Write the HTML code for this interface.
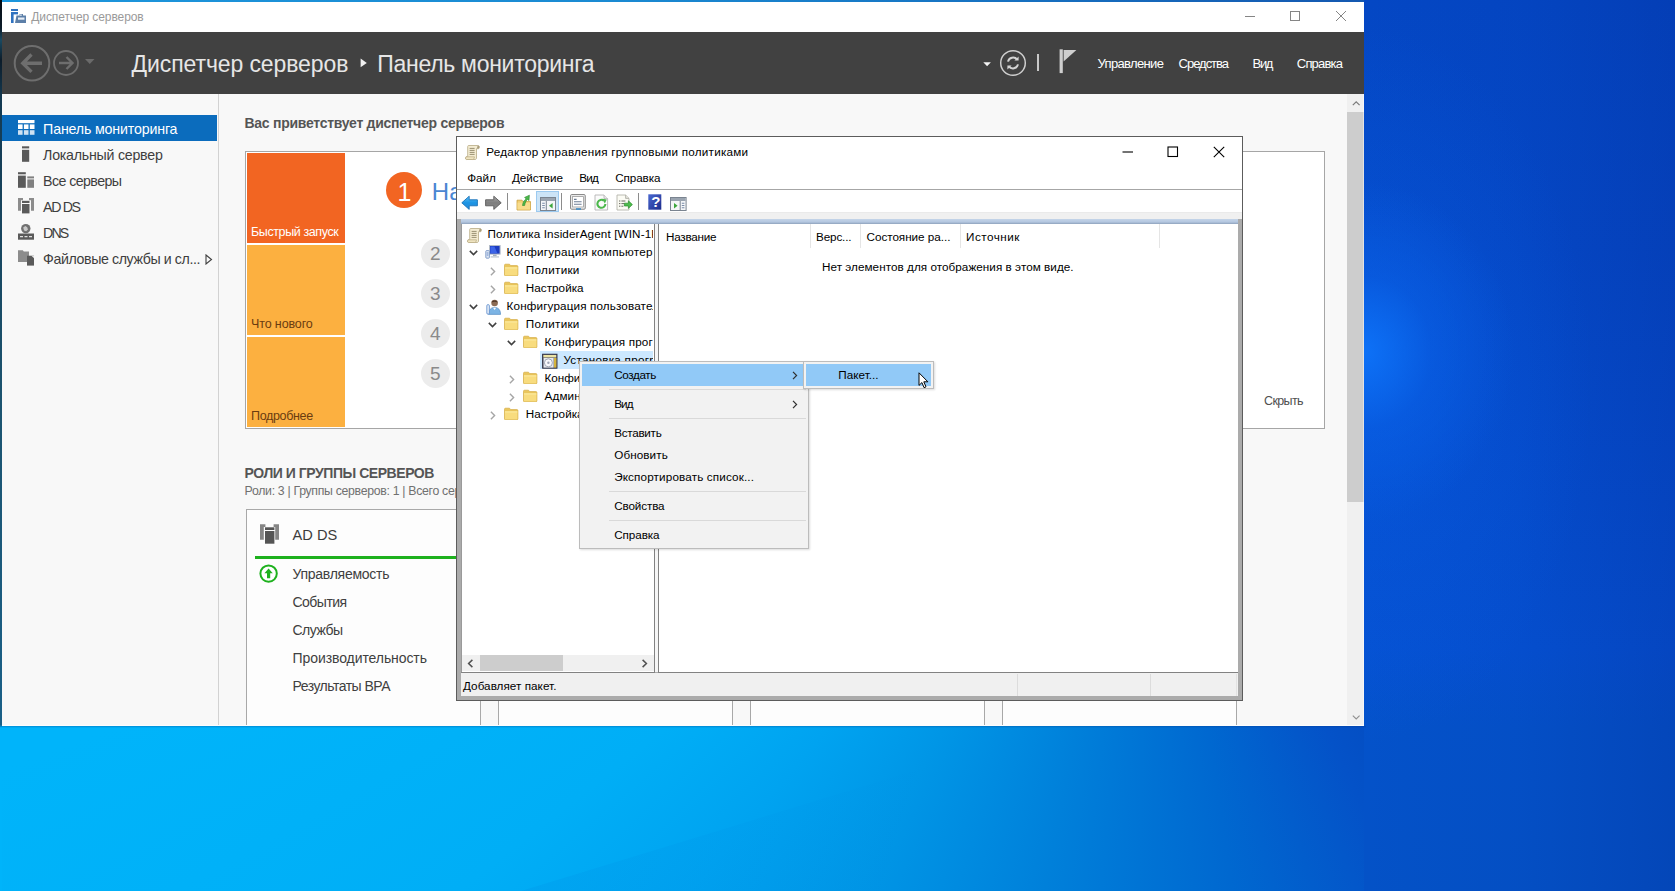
<!DOCTYPE html>
<html lang="ru"><head><meta charset="utf-8"><title>Диспетчер серверов</title>
<style>
html,body{margin:0;padding:0}
body{width:1675px;height:891px;overflow:hidden;position:relative;font-family:"Liberation Sans", sans-serif;background:conic-gradient(from 0deg at 1150px 350px,#0442ba 0deg,#0442b6 125deg,#0440b4 131deg,#0448bc 141deg,#0452c8 155deg,#0068d0 171.3deg,#0080da 191deg,#0096e6 208.6deg,#00a3f0 220.4deg,#00aef6 232deg,#00b4fa 250deg,#00b4fa 360deg);}
div,span.t,svg{position:absolute;box-sizing:border-box}
span.t{white-space:pre;display:block}

</style></head><body>
<div style="left:0px;top:0px;width:2px;height:891px;background:linear-gradient(#060c14 0px,#0c1c2a 28px,#1a4a62 40px,#0c1c2a 60px,#143a52 100px,#1c5470 400px,#1a6088 725px,#00b4fa 727px,#00b4fa 891px)"></div>
<div style="left:1364px;top:0px;width:311px;height:891px;background:radial-gradient(ellipse 150px 170px at 0px 352px, rgba(14,116,250,.92) 0%, rgba(10,100,236,.45) 45%, rgba(6,84,216,0) 100%),radial-gradient(ellipse 230px 360px at 0px 385px, rgba(8,96,230,.42) 0%, rgba(6,84,216,0) 100%),linear-gradient(to right,rgba(4,40,150,0) 0%,rgba(4,40,150,.08) 50%,rgba(4,34,136,.24) 100%),linear-gradient(to bottom,#0447c4 0px,#0549c8 250px,#054dce 450px,#0551d2 650px,#0452ca 727px,#0452c7 891px)"></div>
<div style="left:0px;top:727px;width:1675px;height:164px;clip-path:polygon(521px 164px,1057px 0px,1675px 0px,1675px 164px);background:linear-gradient(107deg,rgba(0,70,190,.0) 30%,rgba(0,70,190,.07) 31%,rgba(0,70,190,0) 55%)"></div>
<div style="left:0px;top:726px;width:1366px;height:2px;background:linear-gradient(rgba(0,50,130,.30),rgba(0,50,130,0))"></div>
<div style="left:2px;top:0px;width:1362px;height:726px;overflow:hidden;background:#f8f8f8">
<div style="left:0px;top:0px;width:1362px;height:2px;background:linear-gradient(to right,#1c96dc 0,#1a8ad2 45%,#1670c0 75%,#1458b0 100%)"></div>
<div style="left:0px;top:2px;width:1362px;height:30px;background:#fff"></div>
<svg style="left:9px;top:9px;" width="15" height="15" viewBox="0 0 15 15"><rect x="0" y="0" width="7" height="2" fill="#2f72c0"/><rect x="0" y="3" width="7" height="2.4" fill="#2f72c0"/><rect x="0" y="5" width="2.6" height="9" fill="#2f72c0"/><path d="M5.5 6.5h3v-1.5h3.5v1.5h3v7.5h-11z" fill="#5c7fa8"/><rect x="7" y="8.5" width="6.5" height="2.2" fill="#e8eef6"/><rect x="8.6" y="5.6" width="2.2" height="1" fill="#fff"/></svg>
<span class="t" style="left:29.3px;top:8.84px;font-size:12px;line-height:16px;color:#9a9a9a;letter-spacing:-0.096px;">Диспетчер серверов</span>
<svg style="left:1242px;top:10px;" width="12" height="12" viewBox="0 0 12 12"><path d="M1 6.5h10" stroke="#858585" stroke-width="1" fill="none"/></svg>
<svg style="left:1287px;top:10px;" width="12" height="12" viewBox="0 0 12 12"><rect x="1.5" y="1.5" width="9" height="9" stroke="#858585" stroke-width="1" fill="none"/></svg>
<svg style="left:1333px;top:10px;" width="12" height="12" viewBox="0 0 12 12"><path d="M1 1l10 10M11 1L1 11" stroke="#858585" stroke-width="1" fill="none"/></svg>
<div style="left:0px;top:32px;width:1362px;height:62px;background:#414141"></div>
<svg style="left:10px;top:44px;" width="40" height="40" viewBox="0 0 40 40"><circle cx="20" cy="19.2" r="17.3" stroke="#6e6e6e" stroke-width="2" fill="none"/><path d="M30 19.2H11M19.5 10.5L10.8 19.2l8.7 8.7" stroke="#6e6e6e" stroke-width="3.4" fill="none"/></svg>
<svg style="left:50px;top:49px;" width="28" height="28" viewBox="0 0 28 28"><circle cx="14" cy="14" r="12" stroke="#6e6e6e" stroke-width="1.8" fill="none"/><path d="M7 14h13M14.5 8l6 6-6 6" stroke="#6e6e6e" stroke-width="2.4" fill="none"/></svg>
<svg style="left:83px;top:59px;" width="10" height="6" viewBox="0 0 10 6"><path d="M0 0h9.5L4.75 5z" fill="#6a6a6a"/></svg>
<span class="t" style="left:129.6px;top:49.23px;font-size:23px;line-height:30px;color:#e6e6e6;letter-spacing:-0.103px;">Диспетчер серверов</span>
<svg style="left:357.8px;top:58px;" width="8" height="10" viewBox="0 0 8 10"><path d="M0.6 0.5l6.2 4.4-6.2 4.4z" fill="#f0f0f0"/></svg>
<span class="t" style="left:375.2px;top:49.23px;font-size:23px;line-height:30px;color:#e6e6e6;letter-spacing:-0.276px;">Панель мониторинга</span>
<svg style="left:980.6px;top:62px;" width="9" height="5" viewBox="0 0 9 5"><path d="M0.3 0.2h7.6L4.1 4.2z" fill="#f4f4f4"/></svg>
<svg style="left:997px;top:49px;" width="28" height="28" viewBox="0 0 28 28"><circle cx="14" cy="14" r="12.3" stroke="#cfcfcf" stroke-width="1.5" fill="none"/><path d="M9 12.6a5.2 5.2 0 0 1 9.2-2M19 15.4a5.2 5.2 0 0 1-9.2 2" stroke="#d4d4d4" stroke-width="2" fill="none"/><path d="M19.6 7.4v4.2h-4.2zM8.4 20.6v-4.2h4.2z" fill="#d4d4d4"/></svg>
<div style="left:1034.5px;top:54px;width:2px;height:17px;background:#c8c8c8"></div>
<svg style="left:1055px;top:48px;" width="22" height="27" viewBox="0 0 22 27"><path d="M2.6 1.3h3.2v23.8h-3.2z" fill="#cfcfcf"/><path d="M6.6 2h12.8L6.6 13.4z" fill="#cfcfcf"/></svg>
<span class="t" style="left:1095.6px;top:55.40px;font-size:13px;line-height:17px;color:#fff;letter-spacing:-0.665px;">Управление</span>
<span class="t" style="left:1176.6px;top:55.40px;font-size:13px;line-height:17px;color:#fff;letter-spacing:-1.028px;">Средства</span>
<span class="t" style="left:1250.6px;top:55.40px;font-size:13px;line-height:17px;color:#fff;letter-spacing:-1.366px;">Вид</span>
<span class="t" style="left:1294.8px;top:55.40px;font-size:13px;line-height:17px;color:#fff;letter-spacing:-0.800px;">Справка</span>
<div style="left:216px;top:94px;width:1px;height:632px;background:#d2d2d2"></div>
<div style="left:0px;top:115px;width:215px;height:26px;background:#0b6cbd"></div>
<svg style="left:16px;top:120.2px;" width="17" height="15" viewBox="0 0 17 15"><g fill="#fff"><rect x="0" y="0" width="16.5" height="3.2"/><rect x="0" y="4.4" width="4.6" height="4.6"/><rect x="5.9" y="4.4" width="4.6" height="4.6"/><rect x="11.8" y="4.4" width="4.7" height="4.6"/><rect x="0" y="10.2" width="4.6" height="4.6" opacity=".8"/><rect x="5.9" y="10.2" width="4.6" height="4.6" opacity=".8"/><rect x="11.8" y="10.2" width="4.7" height="4.6" opacity=".8"/></g></svg>
<svg style="left:15px;top:146px;" width="18" height="17" viewBox="0 0 18 17"><rect x="5" y="0.3" width="7.2" height="2.1" fill="#5a5a5a"/><rect x="5" y="3.8" width="7.2" height="12" fill="#5a5a5a"/></svg>
<svg style="left:15px;top:172px;" width="18" height="17" viewBox="0 0 18 17"><rect x="1" y="0.2" width="7.8" height="2.1" fill="#5a5a5a"/><rect x="1" y="3.6" width="7.8" height="12.2" fill="#5a5a5a"/><rect x="10.3" y="4.4" width="6.7" height="2" fill="#808080"/><rect x="10.3" y="7.4" width="6.7" height="8.4" fill="#808080"/></svg>
<svg style="left:15px;top:197px;" width="18" height="18" viewBox="0 0 18 18"><path d="M1 1h5v2.2h-2v10.5h-3zM17 1h-5v2.2h2v10.5h3z" fill="#8c8c8c"/><rect x="5" y="3.8" width="7.5" height="2.2" fill="#5a5a5a"/><rect x="5" y="7" width="7.5" height="9.4" fill="#5a5a5a"/></svg>
<svg style="left:15px;top:223px;" width="18" height="18" viewBox="0 0 18 18"><circle cx="8.8" cy="5.6" r="4.7" fill="#707070"/><path d="M6.2 4.6l2.2-1.6 1.8 1.2.8 2.2-1.8 1.8-2.2-.8z" fill="#c8c8c8"/><rect x="1" y="10.5" width="16" height="6.2" fill="#5a5a5a"/><path d="M3 13.6h3M7.5 13.6h3M12 13.6h3" stroke="#e0e0e0" stroke-width="1.1"/></svg>
<svg style="left:15px;top:249px;" width="18" height="18" viewBox="0 0 18 18"><path d="M1 1.2h4.8l1 1.4h5.2v10.4h-11z" fill="#8c8c8c"/><path d="M10 6.7h7v9.9h-7z" fill="#5a5a5a"/><path d="M14.4 6.7h2.6v2.6z" fill="#e8e8e8"/></svg>
<span class="t" style="left:41.1px;top:120.08px;font-size:14.2px;line-height:18px;color:#fff;letter-spacing:-0.153px;">Панель мониторинга</span>
<span class="t" style="left:41.1px;top:146.08px;font-size:14.2px;line-height:18px;color:#3e3e3e;letter-spacing:-0.235px;">Локальный сервер</span>
<span class="t" style="left:41.1px;top:172.08px;font-size:14.2px;line-height:18px;color:#3e3e3e;letter-spacing:-0.572px;">Все серверы</span>
<span class="t" style="left:41.1px;top:198.08px;font-size:14.2px;line-height:18px;color:#3e3e3e;letter-spacing:-1.365px;">AD DS</span>
<span class="t" style="left:41.1px;top:224.08px;font-size:14.2px;line-height:18px;color:#3e3e3e;letter-spacing:-1.884px;">DNS</span>
<span class="t" style="left:41.1px;top:250.08px;font-size:14.2px;line-height:18px;color:#3e3e3e;letter-spacing:-0.396px;">Файловые службы и сл...</span>
<svg style="left:203px;top:254px;" width="8" height="11" viewBox="0 0 8 11"><path d="M1 1l5.5 4.5L1 10z" stroke="#404040" stroke-width="1.1" fill="none"/></svg>
<span class="t" style="left:242.5px;top:114.15px;font-size:14px;line-height:18px;color:#555;font-weight:700;letter-spacing:-0.274px;">Вас приветствует диспетчер серверов</span>
<div style="left:243px;top:151px;width:1080px;height:278px;background:#fff;border:1px solid #a6a6a6"></div>
<div style="left:245px;top:153px;width:98px;height:90px;background:#f26522"></div>
<div style="left:245px;top:245px;width:98px;height:90px;background:#fcb040"></div>
<div style="left:245px;top:337px;width:98px;height:90px;background:#fcb040"></div>
<span class="t" style="left:249px;top:223.97px;font-size:12.5px;line-height:16px;color:#fff;letter-spacing:-0.388px;">Быстрый запуск</span>
<span class="t" style="left:249px;top:315.97px;font-size:12.5px;line-height:16px;color:#6a3c10;letter-spacing:-0.121px;">Что нового</span>
<span class="t" style="left:249px;top:407.97px;font-size:12.5px;line-height:16px;color:#6a3c10;letter-spacing:-0.329px;">Подробнее</span>
<div style="left:383.7px;top:172px;width:36px;height:36px;background:#f26522;border-radius:50%"></div>
<span class="t" style="left:395.6px;top:175.74px;font-size:25px;line-height:32px;color:#fff;">1</span>
<span class="t" style="left:429.8px;top:176.18px;font-size:24px;line-height:31px;color:#4a86d2;">На</span>
<div style="left:418.5px;top:239.3px;width:29px;height:29px;background:#ececec;border-radius:50%"></div>
<span class="t" style="left:428px;top:241.42px;font-size:19px;line-height:25px;color:#8a8a8a;">2</span>
<div style="left:418.5px;top:279.3px;width:29px;height:29px;background:#ececec;border-radius:50%"></div>
<span class="t" style="left:428px;top:281.42px;font-size:19px;line-height:25px;color:#8a8a8a;">3</span>
<div style="left:418.5px;top:319.3px;width:29px;height:29px;background:#ececec;border-radius:50%"></div>
<span class="t" style="left:428px;top:321.42px;font-size:19px;line-height:25px;color:#8a8a8a;">4</span>
<div style="left:418.5px;top:359.3px;width:29px;height:29px;background:#ececec;border-radius:50%"></div>
<span class="t" style="left:428px;top:361.42px;font-size:19px;line-height:25px;color:#8a8a8a;">5</span>
<span class="t" style="left:1262px;top:392.67px;font-size:12.5px;line-height:16px;color:#505050;letter-spacing:-0.634px;">Скрыть</span>
<span class="t" style="left:242.6px;top:464.35px;font-size:14px;line-height:18px;color:#555;font-weight:700;letter-spacing:-0.454px;">РОЛИ И ГРУППЫ СЕРВЕРОВ</span>
<span class="t" style="left:242.6px;top:482.74px;font-size:12.3px;line-height:16px;color:#707070;letter-spacing:-0.310px;">Роли: 3 | Группы серверов: 1 | Всего серверов: 1</span>
<div style="left:244px;top:509px;width:235px;height:230px;background:#fdfdfd;border:1px solid #a8a8a8"></div>
<div style="left:496px;top:509px;width:235px;height:230px;background:#fdfdfd;border:1px solid #a8a8a8"></div>
<div style="left:748px;top:509px;width:235px;height:230px;background:#fdfdfd;border:1px solid #a8a8a8"></div>
<div style="left:1000px;top:509px;width:235px;height:230px;background:#fdfdfd;border:1px solid #a8a8a8"></div>
<svg style="left:257px;top:523px;" width="21" height="22" viewBox="0 0 21 22"><path d="M1 1.3h5.4v2.6h-1.6v12.9h-3.8zM20 1.3h-5.4v2.6h1.6v12.9h3.8z" fill="#858585"/><rect x="6" y="4.3" width="9.4" height="2.7" fill="#555"/><rect x="6" y="8" width="9.4" height="12.7" fill="#555"/></svg>
<span class="t" style="left:290.5px;top:526.24px;font-size:14.6px;line-height:19px;color:#3c3c3c;letter-spacing:0.023px;">AD DS</span>
<div style="left:253px;top:556px;width:217px;height:3px;background:#1eb11e"></div>
<svg style="left:257px;top:564px;" width="20" height="20" viewBox="0 0 20 20"><circle cx="9.6" cy="9.6" r="8.2" stroke="#1eb11e" stroke-width="2" fill="#fff"/><path d="M9.6 4.6l4.2 4.6h-2.6v5h-3.2v-5h-2.6z" fill="#1eb11e"/></svg>
<span class="t" style="left:290.5px;top:565.15px;font-size:14px;line-height:18px;color:#404040;letter-spacing:-0.266px;">Управляемость</span>
<span class="t" style="left:290.5px;top:593.15px;font-size:14px;line-height:18px;color:#404040;letter-spacing:-0.516px;">События</span>
<span class="t" style="left:290.5px;top:621.15px;font-size:14px;line-height:18px;color:#404040;letter-spacing:-0.509px;">Службы</span>
<span class="t" style="left:290.5px;top:649.15px;font-size:14px;line-height:18px;color:#404040;letter-spacing:-0.082px;">Производительность</span>
<span class="t" style="left:290.5px;top:677.15px;font-size:14px;line-height:18px;color:#404040;letter-spacing:-0.516px;">Результаты ВРА</span>
<div style="left:1345px;top:94px;width:17px;height:632px;background:#f0f0f0"></div>
<div style="left:1345px;top:112px;width:17px;height:390px;background:#cdcdcd"></div>
<svg style="left:1349px;top:100px;" width="10" height="7" viewBox="0 0 10 7"><path d="M1.8 5.2L5.2 1.8 8.6 5.2" stroke="#7a7a7a" stroke-width="1.2" fill="none"/></svg>
<svg style="left:1349px;top:713.6px;" width="10" height="7" viewBox="0 0 10 7"><path d="M1.8 1.6L5.2 5 8.6 1.6" stroke="#909090" stroke-width="1.1" fill="none"/></svg>
<div style="left:1361px;top:94px;width:1px;height:632px;background:rgba(255,255,255,.45)"></div>
<div style="left:0px;top:725px;width:1362px;height:1px;background:#fdfdfd"></div>
</div>
<div style="left:456px;top:136px;width:787px;height:565px;overflow:hidden;background:#fff;border:1px solid #5c5c5c;overflow:hidden">
<svg style="left:8px;top:7px;" width="16" height="17" viewBox="0 0 16 17"><path d="M3.5 1.5h9.2c1.2 0 2 .8 1.6 2l-.5 1.2h-2.3v9.3c0 .9-.6 1.5-1.5 1.5H1.8c-1 0-1.5-.8-1.2-1.6l.6-1.2h1.5V3c0-.9.3-1.5.8-1.5z" fill="#f4ecd2" stroke="#b8ab84" stroke-width=".8"/><path d="M12.6 1.6c1.3-.1 2 .9 1.7 1.9l-.4 1.1h-2z" fill="#a89c7c"/><path d="M4.6 4.4h5M4.6 6.4h5M4.6 8.4h5M4.6 10.4h5" stroke="#8f8666" stroke-width=".9"/><path d="M1.2 12.8h8.3l-.4 1.5c-.2.7-.6 1.2-1.4 1.2H1.8c-1 0-1.5-.8-1.2-1.6z" fill="#efe4c0" stroke="#b8ab84" stroke-width=".7"/></svg>
<span class="t" style="left:29.3px;top:7.05px;font-size:11.7px;line-height:15px;color:#000;letter-spacing:0.221px;">Редактор управления групповыми политиками</span>
<svg style="left:665px;top:9px;" width="12" height="12" viewBox="0 0 12 12"><path d="M0.5 6h10.5" stroke="#000" stroke-width="1.1" fill="none"/></svg>
<svg style="left:710px;top:8.5px;" width="12" height="12" viewBox="0 0 12 12"><rect x="1" y="1" width="9.5" height="9.5" stroke="#000" stroke-width="1.1" fill="none"/></svg>
<svg style="left:756px;top:8.5px;" width="12" height="12" viewBox="0 0 12 12"><path d="M0.8 0.8l10.4 10.4M11.2 0.8L0.8 11.2" stroke="#000" stroke-width="1.1" fill="none"/></svg>
<span class="t" style="left:10.3px;top:33.05px;font-size:11.7px;line-height:15px;color:#000;letter-spacing:-0.078px;">Файл</span>
<span class="t" style="left:55px;top:33.05px;font-size:11.7px;line-height:15px;color:#000;letter-spacing:-0.056px;">Действие</span>
<span class="t" style="left:122.3px;top:33.05px;font-size:11.7px;line-height:15px;color:#000;letter-spacing:-0.828px;">Вид</span>
<span class="t" style="left:158.2px;top:33.05px;font-size:11.7px;line-height:15px;color:#000;letter-spacing:-0.093px;">Справка</span>
<div style="left:0px;top:52px;width:785px;height:1px;background:#a6a6a6"></div>
<div style="left:0px;top:75px;width:785px;height:7px;background:linear-gradient(#e4e4e4 0,#f0f0f0 1px,#f0f0f0 100%)"></div>
<div style="left:0px;top:82px;width:785px;height:5px;background:#ababab"></div>
<div style="left:4px;top:82px;width:777px;height:5px;background:linear-gradient(#c4d4e8,#b4c7e0 60%,#8ea2bc)"></div>
<svg style="left:4px;top:57.6px;" width="18" height="15.5" viewBox="0 0 18 15.5"><defs><linearGradient id="gb" x1="0" y1="0" x2="0" y2="1"><stop offset="0" stop-color="#5ec0f6"/><stop offset=".5" stop-color="#1c94e4"/><stop offset="1" stop-color="#2a8ad8"/></linearGradient></defs><path d="M8.2 1.2L0.8 7.8l7.4 6.6v-3.6h8.2V4.8H8.2z" fill="url(#gb)" stroke="#1872b8" stroke-width=".9" stroke-linejoin="round"/></svg>
<svg style="left:27px;top:57.6px;" width="18" height="15.5" viewBox="0 0 18 15.5"><defs><linearGradient id="gg" x1="0" y1="0" x2="0" y2="1"><stop offset="0" stop-color="#a8a8a8"/><stop offset=".5" stop-color="#7e7e7e"/><stop offset="1" stop-color="#8c8c8c"/></linearGradient></defs><path d="M9.8 1.2l7.4 6.6-7.4 6.6v-3.6H1.6V4.8h8.2z" fill="url(#gg)" stroke="#5a5a5a" stroke-width=".9" stroke-linejoin="round"/></svg>
<div style="left:50px;top:56px;width:1px;height:17px;background:#8c8c8c"></div>
<svg style="left:59px;top:57px;" width="16" height="17" viewBox="0 0 16 17"><path d="M1 6.2h5l1.2 1.4h7.3v8.4H1z" fill="#f2cf72" stroke="#c9a03c" stroke-width=".8"/><path d="M1.5 8.6h12.6v6.9H1.5z" fill="#f8dc8c"/><path d="M6.5 11.5c.4-3.4 1.8-5.6 3.6-6.6L8.6 3.4 13.4 1.2 13 6.6 11.6 5.4c-1.4 1-2.4 3-3 6.1z" fill="#4cb84c" stroke="#2c8a2c" stroke-width=".6"/></svg>
<div style="left:79px;top:54px;width:23px;height:21px;background:#cce4f7;border:1px solid #9ccaf0"></div>
<svg style="left:83px;top:59.5px;" width="16" height="14" viewBox="0 0 16 14"><rect x=".5" y=".5" width="15" height="13" fill="#f4f6f8" stroke="#7a8490" stroke-width="1"/><rect x="1" y="1" width="14" height="3" fill="#9aa4b0"/><path d="M6.3 4v9.5" stroke="#7a8490" stroke-width="1"/><path d="M2.2 6.3h2.6M2.2 8.5h2.6M2.2 10.7h2.6" stroke="#7a8ca8" stroke-width="1.1"/><path d="M12.6 6l-3.6 2.8 3.6 2.8z" fill="#3ca63c"/></svg>
<div style="left:104px;top:56px;width:1px;height:17px;background:#8c8c8c"></div>
<svg style="left:113px;top:57px;" width="16" height="17" viewBox="0 0 16 17"><rect x=".6" y=".6" width="14.6" height="14.6" rx="1" fill="#f6f6f6" stroke="#7e7e7e" stroke-width="1"/><rect x="2.4" y="2.6" width="11" height="10.4" fill="#fff" stroke="#9a9a9a" stroke-width=".8"/><path d="M4 5.4h2.6M4 7.8h7.6M4 10.2h7.6" stroke="#6c7c94" stroke-width="1.1"/><rect x="6" y="14.2" width="5" height="1.6" fill="#3c8cc8"/></svg>
<svg style="left:137px;top:56.6px;" width="15" height="17" viewBox="0 0 15 17"><path d="M1 1h9l3.6 3.6V16H1z" fill="#fbfbfb" stroke="#b4b4b4" stroke-width=".9"/><path d="M10 1v3.6h3.6" fill="#e8e8e8" stroke="#b4b4b4" stroke-width=".8"/><path d="M11.4 10a4 4 0 1 1-1.6-3.4" stroke="#4cb84c" stroke-width="2.1" fill="none"/><path d="M8.2 4.8l4.6.6-2 4z" fill="#4cb84c"/></svg>
<svg style="left:159px;top:56.6px;" width="17" height="17" viewBox="0 0 17 17"><path d="M1 1h8.6l3.4 3.4V16H1z" fill="#fbfbf4" stroke="#b4b4ac" stroke-width=".9"/><path d="M9.6 1v3.4H13" fill="#e4e4dc" stroke="#a8a8a0" stroke-width=".8"/><path d="M3 7h1.4M5.4 7h4M3 9.6h1.4M5.4 9.6h3M3 12.2h1.4M5.4 12.2h2" stroke="#6a6a60" stroke-width="1"/><path d="M8.4 9.2h4V6.8l4 3.8-4 3.8V12h-4z" fill="#4cbc4c" stroke="#2c8c2c" stroke-width=".7"/></svg>
<div style="left:181px;top:56px;width:1px;height:17px;background:#8c8c8c"></div>
<svg style="left:191px;top:57px;" width="14" height="16" viewBox="0 0 14 16"><defs><linearGradient id="gh" x1="0" y1="0" x2="1" y2="1"><stop offset="0" stop-color="#4a68d0"/><stop offset="1" stop-color="#1c2c8c"/></linearGradient></defs><rect x=".3" y=".3" width="13" height="15.4" fill="url(#gh)"/></svg>
<span class="t" style="left:194.2px;top:55.20px;font-size:15px;line-height:20px;color:#fff;font-weight:700;">?</span>
<svg style="left:213px;top:59.5px;" width="17" height="14" viewBox="0 0 17 14"><rect x=".5" y=".5" width="15.6" height="13" fill="#f4f6f8" stroke="#7a8490" stroke-width="1"/><rect x="1" y="1" width="14.6" height="3" fill="#9aa4b0"/><path d="M10.2 4v9.5" stroke="#7a8490" stroke-width="1"/><path d="M11.8 6.3h2.6M11.8 8.5h2.6M11.8 10.7h2.6" stroke="#7a8ca8" stroke-width="1.1"/><path d="M4 6l3.6 2.8L4 11.6z" fill="#3ca63c"/></svg>
<div style="left:0px;top:87px;width:785px;height:476px;background:#ababab"></div>
<div style="left:4px;top:87px;width:194px;height:449px;overflow:hidden;background:#fff;border-right:1px solid #828282;border-bottom:1px solid #828282">
<div style="left:79px;top:127px;width:114px;height:18px;background:#cce8ff"></div>
<svg style="left:5.5px;top:2.5px;" width="16" height="17" viewBox="0 0 16 17"><path d="M3.5 1.5h9.2c1.2 0 2 .8 1.6 2l-.5 1.2h-2.3v9.3c0 .9-.6 1.5-1.5 1.5H1.8c-1 0-1.5-.8-1.2-1.6l.6-1.2h1.5V3c0-.9.3-1.5.8-1.5z" fill="#f4ecd2" stroke="#b8ab84" stroke-width=".8"/><path d="M12.6 1.6c1.3-.1 2 .9 1.7 1.9l-.4 1.1h-2z" fill="#a89c7c"/><path d="M4.6 4.4h5M4.6 6.4h5M4.6 8.4h5M4.6 10.4h5" stroke="#8f8666" stroke-width=".9"/><path d="M1.2 12.8h8.3l-.4 1.5c-.2.7-.6 1.2-1.4 1.2H1.8c-1 0-1.5-.8-1.2-1.6z" fill="#efe4c0" stroke="#b8ab84" stroke-width=".7"/></svg>
<span class="t" style="left:26.5px;top:2.05px;font-size:11.7px;line-height:15px;color:#000;letter-spacing:0.129px;">Политика InsiderAgent [WIN-1RPQ5V8</span>
<svg style="left:8.2px;top:25.8px;" width="9" height="6" viewBox="0 0 9 6"><path d="M0.8 0.9l3.7 3.7 3.7-3.7" stroke="#404040" stroke-width="1.5" fill="none"/></svg>
<svg style="left:24px;top:21px;" width="16" height="14" viewBox="0 0 16 14"><rect x="4.5" y=".5" width="10.6" height="8.6" fill="#1c3cc0" stroke="#b4bcc8" stroke-width="1"/><path d="M5.4 1.4h4l3 6.8h-7z" fill="#3c64e8"/><rect x="8" y="9.6" width="3.6" height="1.6" fill="#a8b0bc"/><rect x="5.6" y="11.2" width="8.4" height="1.4" fill="#c4ccd6"/><rect x=".8" y="5.6" width="3.6" height="7.6" rx=".8" fill="#dfe8f4" stroke="#6c8cc0" stroke-width=".8"/><path d="M1.8 8h1.6M1.8 10h1.6" stroke="#4c74c0" stroke-width=".8"/></svg>
<span class="t" style="left:45.6px;top:20.05px;font-size:11.7px;line-height:15px;color:#000;letter-spacing:0.257px;">Конфигурация компьютера</span>
<svg style="left:29.3px;top:42.5px;" width="6" height="9" viewBox="0 0 6 9"><path d="M0.9 0.8l3.7 3.7-3.7 3.7" stroke="#a6a6a6" stroke-width="1.4" fill="none"/></svg>
<svg style="left:43px;top:39.3px;" width="15" height="13" viewBox="0 0 15 13"><path d="M.5 2.2c0-.6.4-1 1-1h4l1.2 1.4h6.2c.6 0 1 .4 1 1v8.3c0 .5-.4.9-1 .9H1.5c-.6 0-1-.4-1-.9z" fill="#eac65c" stroke="#d4ac44" stroke-width=".7"/><path d="M1 4.4h12.4v7.3c0 .4-.2.6-.6.6H1.6c-.4 0-.6-.2-.6-.6z" fill="#f8dc7e"/><path d="M1 4.4h12.4v1H1z" fill="#fdeea8"/></svg>
<span class="t" style="left:64.8px;top:38.05px;font-size:11.7px;line-height:15px;color:#000;letter-spacing:0.298px;">Политики</span>
<svg style="left:29.3px;top:60.5px;" width="6" height="9" viewBox="0 0 6 9"><path d="M0.9 0.8l3.7 3.7-3.7 3.7" stroke="#a6a6a6" stroke-width="1.4" fill="none"/></svg>
<svg style="left:43px;top:57.3px;" width="15" height="13" viewBox="0 0 15 13"><path d="M.5 2.2c0-.6.4-1 1-1h4l1.2 1.4h6.2c.6 0 1 .4 1 1v8.3c0 .5-.4.9-1 .9H1.5c-.6 0-1-.4-1-.9z" fill="#eac65c" stroke="#d4ac44" stroke-width=".7"/><path d="M1 4.4h12.4v7.3c0 .4-.2.6-.6.6H1.6c-.4 0-.6-.2-.6-.6z" fill="#f8dc7e"/><path d="M1 4.4h12.4v1H1z" fill="#fdeea8"/></svg>
<span class="t" style="left:64.8px;top:56.05px;font-size:11.7px;line-height:15px;color:#000;letter-spacing:0.032px;">Настройка</span>
<svg style="left:8.2px;top:79.8px;" width="9" height="6" viewBox="0 0 9 6"><path d="M0.8 0.9l3.7 3.7 3.7-3.7" stroke="#404040" stroke-width="1.5" fill="none"/></svg>
<svg style="left:25px;top:74.5px;" width="15" height="16" viewBox="0 0 15 16"><circle cx="8.6" cy="4" r="3.3" fill="#8c6c54"/><path d="M5.6 3.4c.6-2.4 5-2.6 6 0-1.6-1-4.2-1-6 0z" fill="#4c3424"/><path d="M2.6 15.4c0-4.6 2.4-7 6-7s6 2.4 6 7z" fill="#7cb4e4" stroke="#4c84bc" stroke-width=".6"/><path d="M7 8.8l1.6 2.2 1.6-2.2z" fill="#fff"/><rect x=".8" y="5.6" width="2.6" height="9.6" rx="1.2" fill="#e4ecf8" stroke="#5c8ccc" stroke-width=".8"/></svg>
<span class="t" style="left:45.6px;top:74.05px;font-size:11.7px;line-height:15px;color:#000;letter-spacing:0.130px;">Конфигурация пользователя</span>
<svg style="left:27.2px;top:97.8px;" width="9" height="6" viewBox="0 0 9 6"><path d="M0.8 0.9l3.7 3.7 3.7-3.7" stroke="#404040" stroke-width="1.5" fill="none"/></svg>
<svg style="left:43px;top:93.3px;" width="15" height="13" viewBox="0 0 15 13"><path d="M.5 2.2c0-.6.4-1 1-1h4l1.2 1.4h6.2c.6 0 1 .4 1 1v8.3c0 .5-.4.9-1 .9H1.5c-.6 0-1-.4-1-.9z" fill="#eac65c" stroke="#d4ac44" stroke-width=".7"/><path d="M1 4.4h12.4v7.3c0 .4-.2.6-.6.6H1.6c-.4 0-.6-.2-.6-.6z" fill="#f8dc7e"/><path d="M1 4.4h12.4v1H1z" fill="#fdeea8"/></svg>
<span class="t" style="left:64.8px;top:92.05px;font-size:11.7px;line-height:15px;color:#000;letter-spacing:0.298px;">Политики</span>
<svg style="left:46.2px;top:115.8px;" width="9" height="6" viewBox="0 0 9 6"><path d="M0.8 0.9l3.7 3.7 3.7-3.7" stroke="#404040" stroke-width="1.5" fill="none"/></svg>
<svg style="left:62px;top:111.3px;" width="15" height="13" viewBox="0 0 15 13"><path d="M.5 2.2c0-.6.4-1 1-1h4l1.2 1.4h6.2c.6 0 1 .4 1 1v8.3c0 .5-.4.9-1 .9H1.5c-.6 0-1-.4-1-.9z" fill="#eac65c" stroke="#d4ac44" stroke-width=".7"/><path d="M1 4.4h12.4v7.3c0 .4-.2.6-.6.6H1.6c-.4 0-.6-.2-.6-.6z" fill="#f8dc7e"/><path d="M1 4.4h12.4v1H1z" fill="#fdeea8"/></svg>
<span class="t" style="left:83.6px;top:110.05px;font-size:11.7px;line-height:15px;color:#000;letter-spacing:0.182px;">Конфигурация программ</span>
<svg style="left:80.5px;top:128.5px;" width="16" height="16" viewBox="0 0 16 16"><rect x=".6" y="1.2" width="14.4" height="14" fill="#5c5c6c" stroke="#2c2c3c" stroke-width=".9"/><rect x="1.4" y="2" width="12.8" height="2.4" fill="#ece4a4"/><rect x="1.6" y="5" width="10" height="9.6" fill="#e8ecf0"/><circle cx="6.4" cy="9.8" r="4" fill="#f8f8fc" stroke="#8c94a4" stroke-width=".8"/><circle cx="6.4" cy="9.8" r="1.2" fill="#9ca4b4"/><rect x="12" y="5" width="2.4" height="9.6" fill="#d4b43c"/></svg>
<span class="t" style="left:102.4px;top:128.05px;font-size:11.7px;line-height:15px;color:#000;letter-spacing:0.270px;">Установка программ</span>
<svg style="left:48.3px;top:150.5px;" width="6" height="9" viewBox="0 0 6 9"><path d="M0.9 0.8l3.7 3.7-3.7 3.7" stroke="#a6a6a6" stroke-width="1.4" fill="none"/></svg>
<svg style="left:62px;top:147.3px;" width="15" height="13" viewBox="0 0 15 13"><path d="M.5 2.2c0-.6.4-1 1-1h4l1.2 1.4h6.2c.6 0 1 .4 1 1v8.3c0 .5-.4.9-1 .9H1.5c-.6 0-1-.4-1-.9z" fill="#eac65c" stroke="#d4ac44" stroke-width=".7"/><path d="M1 4.4h12.4v7.3c0 .4-.2.6-.6.6H1.6c-.4 0-.6-.2-.6-.6z" fill="#f8dc7e"/><path d="M1 4.4h12.4v1H1z" fill="#fdeea8"/></svg>
<span class="t" style="left:83.6px;top:146.05px;font-size:11.7px;line-height:15px;color:#000;letter-spacing:-0.070px;">Конфигурация Windows</span>
<svg style="left:48.3px;top:168.5px;" width="6" height="9" viewBox="0 0 6 9"><path d="M0.9 0.8l3.7 3.7-3.7 3.7" stroke="#a6a6a6" stroke-width="1.4" fill="none"/></svg>
<svg style="left:62px;top:165.3px;" width="15" height="13" viewBox="0 0 15 13"><path d="M.5 2.2c0-.6.4-1 1-1h4l1.2 1.4h6.2c.6 0 1 .4 1 1v8.3c0 .5-.4.9-1 .9H1.5c-.6 0-1-.4-1-.9z" fill="#eac65c" stroke="#d4ac44" stroke-width=".7"/><path d="M1 4.4h12.4v7.3c0 .4-.2.6-.6.6H1.6c-.4 0-.6-.2-.6-.6z" fill="#f8dc7e"/><path d="M1 4.4h12.4v1H1z" fill="#fdeea8"/></svg>
<span class="t" style="left:83.6px;top:164.05px;font-size:11.7px;line-height:15px;color:#000;letter-spacing:0.124px;">Административные шаблоны</span>
<svg style="left:29.3px;top:186.5px;" width="6" height="9" viewBox="0 0 6 9"><path d="M0.9 0.8l3.7 3.7-3.7 3.7" stroke="#a6a6a6" stroke-width="1.4" fill="none"/></svg>
<svg style="left:43px;top:183.3px;" width="15" height="13" viewBox="0 0 15 13"><path d="M.5 2.2c0-.6.4-1 1-1h4l1.2 1.4h6.2c.6 0 1 .4 1 1v8.3c0 .5-.4.9-1 .9H1.5c-.6 0-1-.4-1-.9z" fill="#eac65c" stroke="#d4ac44" stroke-width=".7"/><path d="M1 4.4h12.4v7.3c0 .4-.2.6-.6.6H1.6c-.4 0-.6-.2-.6-.6z" fill="#f8dc7e"/><path d="M1 4.4h12.4v1H1z" fill="#fdeea8"/></svg>
<span class="t" style="left:64.8px;top:182.05px;font-size:11.7px;line-height:15px;color:#000;letter-spacing:0.032px;">Настройка</span>
<div style="left:191.5px;top:0px;width:1.5px;height:431px;background:#fff"></div>
<div style="left:0px;top:431px;width:193px;height:16px;background:#f0f0f0"></div>
<div style="left:19px;top:431px;width:83px;height:16px;background:#cdcdcd"></div>
<svg style="left:6px;top:434.5px;" width="7" height="9" viewBox="0 0 7 9"><path d="M5.4 0.9L1.6 4.5l3.8 3.6" stroke="#505050" stroke-width="1.5" fill="none"/></svg>
<svg style="left:180px;top:434.5px;" width="7" height="9" viewBox="0 0 7 9"><path d="M1.6 0.9l3.8 3.6-3.8 3.6" stroke="#505050" stroke-width="1.5" fill="none"/></svg>
</div>
<div style="left:4px;top:87px;width:1px;height:448px;background:#9a9a9a"></div>
<div style="left:198px;top:87px;width:3px;height:448px;background:#f6f6f6"></div>
<div style="left:201px;top:87px;width:580px;height:449px;overflow:hidden;background:#fff;border-left:1px solid #828282;border-bottom:1px solid #828282">
<div style="left:150.5px;top:0px;width:1px;height:24px;background:#e5e5e5"></div>
<div style="left:200.5px;top:0px;width:1px;height:24px;background:#e5e5e5"></div>
<div style="left:300.5px;top:0px;width:1px;height:24px;background:#e5e5e5"></div>
<div style="left:500px;top:0px;width:1px;height:24px;background:#e5e5e5"></div>
<span class="t" style="left:7px;top:4.85px;font-size:11.7px;line-height:15px;color:#000;letter-spacing:-0.233px;">Название</span>
<span class="t" style="left:157px;top:4.85px;font-size:11.7px;line-height:15px;color:#000;letter-spacing:-0.132px;">Верс...</span>
<span class="t" style="left:207.5px;top:4.85px;font-size:11.7px;line-height:15px;color:#000;letter-spacing:-0.029px;">Состояние ра...</span>
<span class="t" style="left:307px;top:4.85px;font-size:11.7px;line-height:15px;color:#000;letter-spacing:0.499px;">Источник</span>
<span class="t" style="left:163px;top:34.85px;font-size:11.7px;line-height:15px;color:#000;letter-spacing:0.049px;">Нет элементов для отображения в этом виде.</span>
</div>
<div style="left:4px;top:536px;width:777px;height:23px;background:#f0f0f0"></div>
<div style="left:560px;top:537px;width:1px;height:22px;background:#dcdcdc"></div>
<div style="left:693px;top:537px;width:1px;height:22px;background:#dcdcdc"></div>
<div style="left:779px;top:537px;width:1px;height:22px;background:#e2e2e2"></div>
<span class="t" style="left:6px;top:540.95px;font-size:11.7px;line-height:15px;color:#000;letter-spacing:0.042px;">Добавляет пакет.</span>
</div>
<div style="left:579px;top:361px;width:230px;height:188px;background:#f2f2f2;border:1px solid #bcbcbc;box-shadow:1px 1px 2px rgba(0,0,0,.14)"></div>
<div style="left:582px;top:364px;width:222px;height:22px;background:#91c9f7"></div>
<div style="left:609px;top:389px;width:197px;height:1px;background:#d9d9d9"></div>
<div style="left:609px;top:418px;width:197px;height:1px;background:#d9d9d9"></div>
<div style="left:609px;top:491px;width:197px;height:1px;background:#d9d9d9"></div>
<div style="left:609px;top:520px;width:197px;height:1px;background:#d9d9d9"></div>
<span class="t" style="left:614.2px;top:367.25px;font-size:11.7px;line-height:15px;color:#000;letter-spacing:-0.370px;">Создать</span>
<span class="t" style="left:614.2px;top:396.25px;font-size:11.7px;line-height:15px;color:#000;letter-spacing:-0.878px;">Вид</span>
<span class="t" style="left:614.2px;top:425.25px;font-size:11.7px;line-height:15px;color:#000;letter-spacing:-0.278px;">Вставить</span>
<span class="t" style="left:614.2px;top:447.25px;font-size:11.7px;line-height:15px;color:#000;letter-spacing:0.097px;">Обновить</span>
<span class="t" style="left:614.2px;top:469.25px;font-size:11.7px;line-height:15px;color:#000;letter-spacing:0.144px;">Экспортировать список...</span>
<span class="t" style="left:614.2px;top:498.25px;font-size:11.7px;line-height:15px;color:#000;letter-spacing:-0.133px;">Свойства</span>
<span class="t" style="left:614.2px;top:527.25px;font-size:11.7px;line-height:15px;color:#000;letter-spacing:-0.077px;">Справка</span>
<svg style="left:791.5px;top:370.5px;" width="6" height="9" viewBox="0 0 6 9"><path d="M1 0.8l3.6 3.7L1 8.2" stroke="#303030" stroke-width="1.2" fill="none"/></svg>
<svg style="left:791.5px;top:399.5px;" width="6" height="9" viewBox="0 0 6 9"><path d="M1 0.8l3.6 3.7L1 8.2" stroke="#303030" stroke-width="1.2" fill="none"/></svg>
<div style="left:803px;top:361px;width:131px;height:28px;background:#f2f2f2;border:1px solid #bcbcbc;box-shadow:1px 1px 2px rgba(0,0,0,.14)"></div>
<div style="left:806px;top:364px;width:125px;height:22px;background:#91c9f7"></div>
<span class="t" style="left:838.3px;top:367.25px;font-size:11.7px;line-height:15px;color:#000;letter-spacing:0.034px;">Пакет...</span>
<svg style="left:917.5px;top:372px;" width="12" height="18" viewBox="0 0 12 18"><path d="M1 0.8v12.6l2.9-2.8 2.2 5.1 1.9-.9-2.2-5h4.1z" fill="#fff" stroke="#000" stroke-width="1" stroke-linejoin="miter"/></svg>
</body></html>
